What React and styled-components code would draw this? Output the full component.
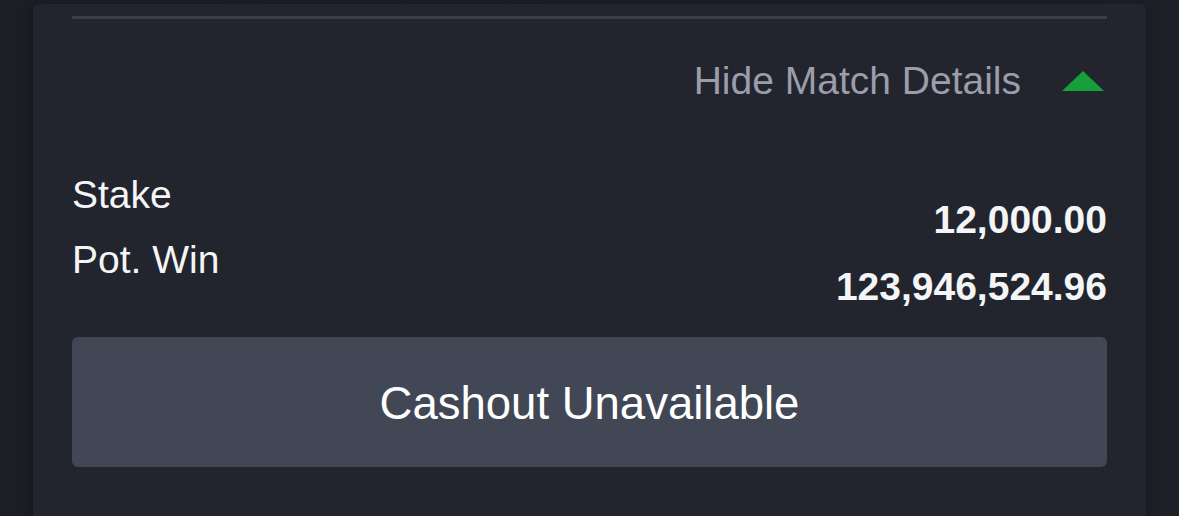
import React, { useState } from 'react';
import styled, { createGlobalStyle } from 'styled-components';

const GlobalStyle = createGlobalStyle`
  html, body {
    margin: 0;
    padding: 0;
    background: #1b1d24;
    font-family: 'Liberation Sans', Arial, Helvetica, sans-serif;
    overflow: hidden;
  }
`;

export default function App() {
  const [open, setOpen] = useState(true);

  return (
    <>
      <GlobalStyle />
      <Page>
        <Panel>
          <Divider />
          <ToggleRow onClick={() => setOpen((prev) => !prev)}>
            <ToggleText>{open ? 'Hide Match Details' : 'Show Match Details'}</ToggleText>
            <Arrow $open={open} width="42" height="20" viewBox="0 0 42 20">
              <polygon points="21,0 42,20 0,20" fill="#17a03a" />
            </Arrow>
          </ToggleRow>
          <Stats>
            <Labels>
              <Label>Stake</Label>
              <Label>Pot. Win</Label>
            </Labels>
            <Values>
              <Value>12,000.00</Value>
              <Value>123,946,524.96</Value>
            </Values>
          </Stats>
          <CashoutButton disabled>Cashout Unavailable</CashoutButton>
        </Panel>
      </Page>
    </>
  );
}

const Page = styled.div`
  height: 516px;
  padding: 4px 33px 0 33px;
  box-sizing: border-box;
  background: linear-gradient(90deg, #1c1e25 0%, #1e2028 100%);
`;

const Panel = styled.section`
  height: 100%;
  background: #22252e;
  border-radius: 6px 6px 0 0;
  padding: 12px 39px 0;
  display: flex;
  flex-direction: column;
  box-shadow: -6px 0 8px rgba(0, 0, 0, 0.12), 6px 0 8px rgba(0, 0, 0, 0.12);
`;

const Divider = styled.div`
  height: 3px;
  background: #3a3d4b;
`;

const ToggleRow = styled.div`
  margin-top: 39px;
  height: 45px;
  display: flex;
  align-items: center;
  justify-content: flex-end;
  gap: 41px;
  padding-right: 3px;
  cursor: pointer;
`;

const ToggleText = styled.span`
  font-size: 39px;
  line-height: 45px;
  color: #9b9dab;
`;

const Arrow = styled.svg`
  display: block;
  transform: ${(props) => (props.$open ? 'none' : 'rotate(180deg)')};
`;

const Stats = styled.div`
  margin-top: 69px;
  display: flex;
  justify-content: space-between;
`;

const Labels = styled.div`
  display: flex;
  flex-direction: column;
  gap: 20px;
`;

const Label = styled.div`
  font-size: 39px;
  line-height: 45px;
  color: #f4f5f7;
`;

const Values = styled.div`
  display: flex;
  flex-direction: column;
  align-items: flex-end;
  gap: 22px;
  padding-top: 25px;
`;

const Value = styled.div`
  font-size: 39px;
  line-height: 45px;
  font-weight: 700;
  color: #f4f5f7;
`;

const CashoutButton = styled.button`
  margin-top: 28px;
  height: 130px;
  flex-shrink: 0;
  border: none;
  border-radius: 6px;
  background: #424755;
  color: #ffffff;
  font-family: inherit;
  font-size: 45.5px;
  padding: 4px 0 0;
  cursor: not-allowed;
`;
